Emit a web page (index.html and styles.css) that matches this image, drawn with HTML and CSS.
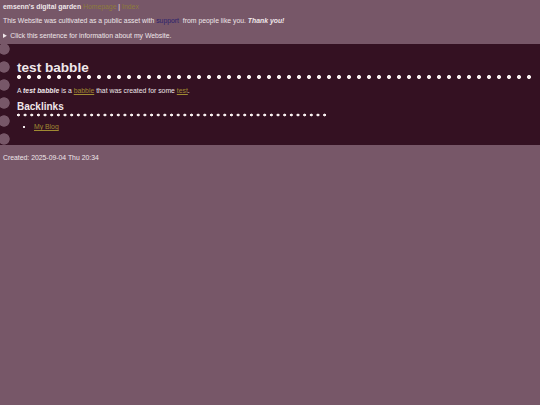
FILE: index.html
```html
<!DOCTYPE html>
<html lang="en">
<head>
<meta charset="utf-8">
<title>test babble</title>
<link rel="stylesheet" href="styles.css">
</head>
<body>
<header class="top">
  <p class="site"><b>emsenn's digital garden</b> <a class="nav" href="#">Homepage</a> | <a class="nav" href="#">Index</a></p>
  <p class="support">This Website was cultivated as a public asset with <a class="sup" href="#">support</a>&nbsp; from people like you. <b><i>Thank you!</i></b></p>
  <details class="about"><summary>Click this sentence for information about my Website.</summary></details>
</header>
<main class="sheet">
  <h1 class="title">test babble</h1>
  <p class="text">A <b><i>test babble</i></b> is a <a class="gold" href="#">babble</a> that was created for some <a class="gold" href="#">test</a>.</p>
  <h2 class="sub">Backlinks</h2>
  <ul class="links">
    <li><a class="gold" href="#">My Blog</a></li>
  </ul>
</main>
<footer class="foot">Created: 2025-09-04 Thu 20:34</footer>
</body>
</html>
```

FILE: styles.css
```css
html, body {
  margin: 0;
  padding: 0;
}
body {
  background: #775768;
  color: #efe6e9;
  font-family: "Liberation Sans", Arial, sans-serif;
  font-size: 6.85px;
  width: 540px;
  height: 405px;
}
.top {
  padding: 3px 3px 0;
}
.site, .support {
  margin: 0;
  line-height: 8px;
}
.support {
  margin-top: 6px;
}
.about {
  margin-top: 7px;
  line-height: 8px;
}
.about summary {
  cursor: pointer;
}
.nav {
  color: #8e7c3c;
  text-decoration: none;
}
.sup {
  color: #2a1f6e;
  text-decoration: none;
}
.gold {
  color: #a08a32;
  text-decoration: underline;
}
.sheet {
  margin-top: 4px;
  background-color: #341122;
  background-image: radial-gradient(circle at 4px 9px, #775768 5.3px, rgba(119, 87, 104, 0) 6px);
  background-size: 12px 18px;
  background-repeat: repeat-y;
  background-position: 0 -4px;
  padding: 16px 5px 14px 17px;
}
.title {
  margin: 0;
  font-size: 13.6px;
  line-height: 16px;
  font-weight: bold;
  padding-bottom: 3px;
  background-image: radial-gradient(circle at 2px 2px, #f8f0f0 1.7px, rgba(248, 240, 240, 0) 2.3px);
  background-size: 10px 4px;
  background-repeat: repeat-x;
  background-position: 0 100%;
}
.text {
  margin: 8px 0 0;
  line-height: 8px;
}
.sub {
  margin: 6px 0 0;
  width: 310px;
  font-size: 10px;
  line-height: 12px;
  font-weight: bold;
  padding-bottom: 4px;
  background-image: radial-gradient(circle at 1.5px 2px, #f8f0f0 1.2px, rgba(248, 240, 240, 0) 1.7px);
  background-size: 6.67px 4px;
  background-repeat: repeat-x;
  background-position: 0 100%;
}
.links {
  margin: 6px 0 0;
  padding-left: 17px;
  line-height: 8px;
  list-style: square;
}
.foot {
  margin-top: 9px;
  padding-left: 3px;
  line-height: 8px;
}
```
